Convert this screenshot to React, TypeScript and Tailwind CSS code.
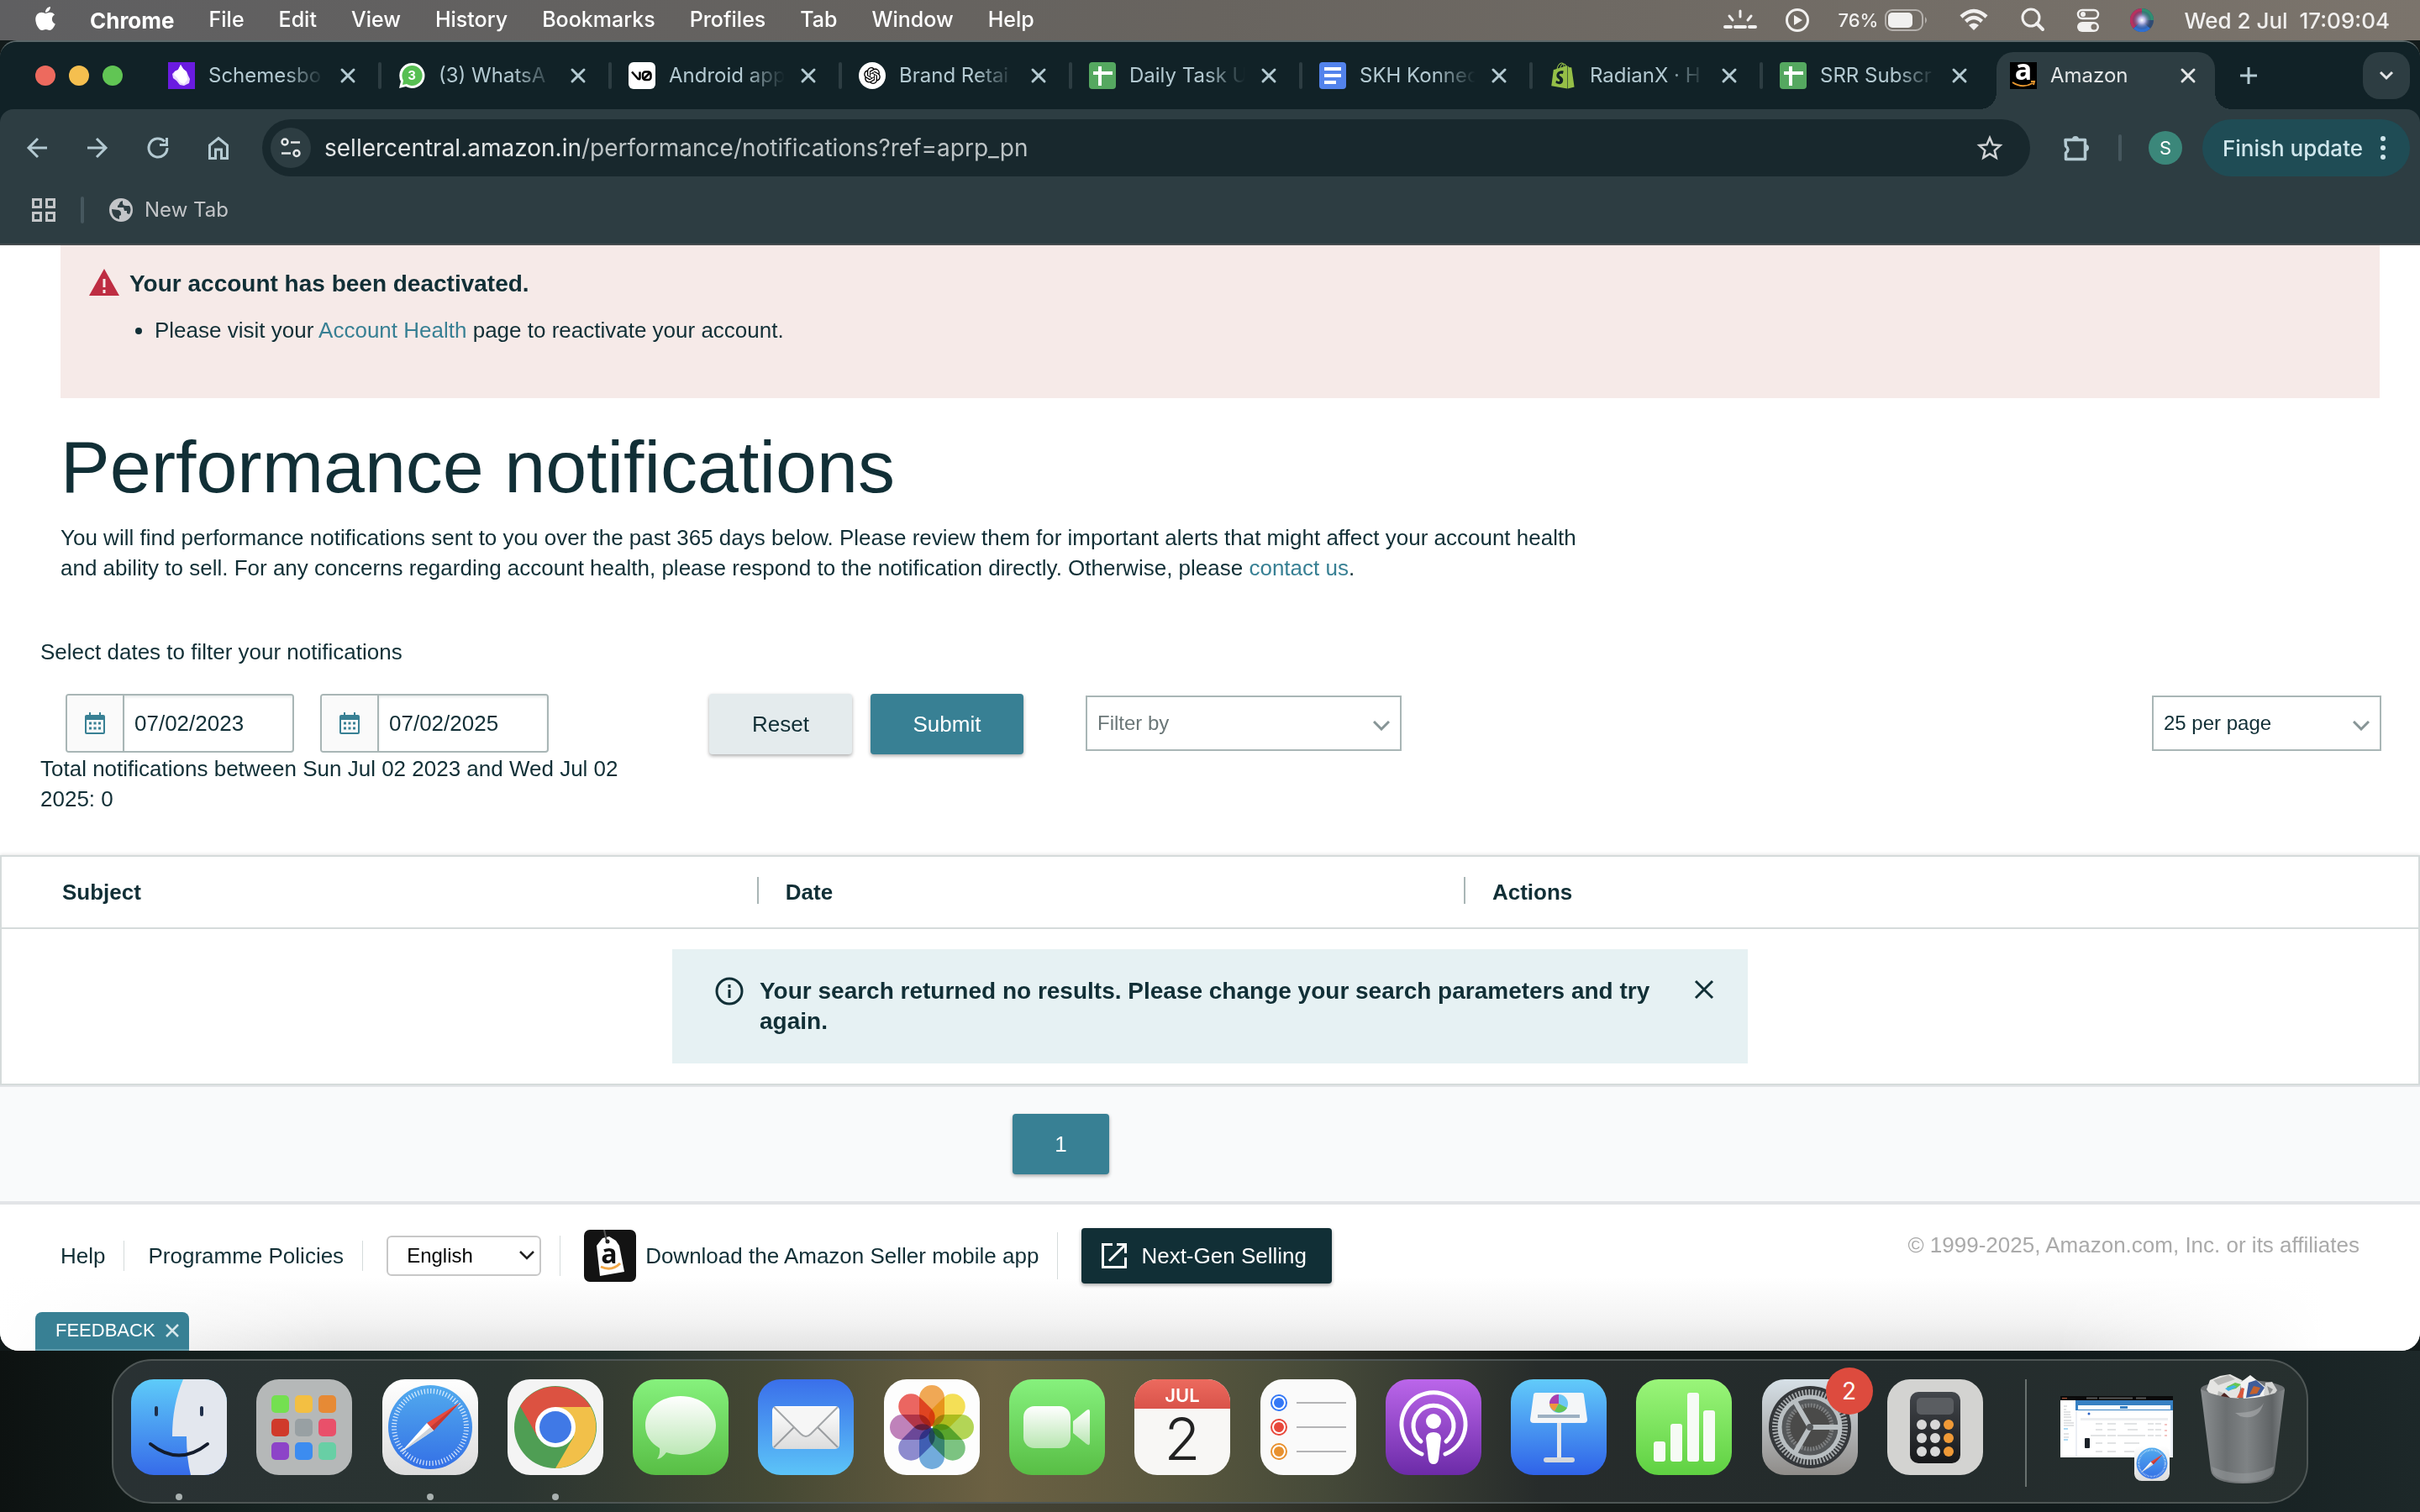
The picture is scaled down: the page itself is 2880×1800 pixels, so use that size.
import React from "react";
import { FaApple, FaShopify } from "react-icons/fa";
import { RiOpenaiFill } from "react-icons/ri";

const menuItems = [
	"File",
	"Edit",
	"View",
	"History",
	"Bookmarks",
	"Profiles",
	"Tab",
	"Window",
	"Help",
];

/* ---------- favicons ---------- */

const SchemesIcon = () => (
	<svg viewBox="0 0 32 32" className="size-8 shrink-0">
		<rect width="32" height="32" fill="#6a1be0" />
		<path
			d="M15 3l3 5 4 3 2 5 2 4-1 5-6 3-5-1-4-5-4-3-1-5 3-3 4-2z"
			fill="#e9dafb"
		/>
		<path d="M15 3l3 5 4 4 1 9-4 5-5-2-3-5-4-4 1-4 4-2z" fill="#fff" />
	</svg>
);

const WhatsappIcon = () => (
	<svg viewBox="0 0 32 32" className="size-8 shrink-0">
		<path
			d="M16 1a15 15 0 1 1-7 28l-8 2 2-8A15 15 0 0 1 16 1z"
			fill="#fff"
		/>
		<path
			d="M16 4a12 12 0 1 1-6 22l-5 1 1-5A12 12 0 0 1 16 4z"
			fill="#57bf52"
		/>
		<text
			x="16"
			y="21"
			fontSize="15"
			fontWeight="700"
			textAnchor="middle"
			fill="#fff"
			fontFamily="Inter, sans-serif"
		>
			3
		</text>
	</svg>
);

const VZeroIcon = () => (
	<svg viewBox="0 0 32 32" className="size-8 shrink-0">
		<rect width="32" height="32" rx="6" fill="#fff" />
		<path
			d="M4 11.500l7.500 8.500q2 1 2-1v-7.500"
			fill="none"
			stroke="#000"
			strokeWidth="2.500"
		/>
		<rect
			x="17"
			y="11.500"
			width="9.500"
			height="9.500"
			rx="3"
			fill="none"
			stroke="#000"
			strokeWidth="2.500"
		/>
		<path d="M18 20l8-8" stroke="#000" strokeWidth="2.500" />
	</svg>
);

const OpenAiIcon = () => (
	<span className="flex size-8 shrink-0 items-center justify-center rounded-full bg-white">
		<RiOpenaiFill className="size-6 text-black" />
	</span>
);

const SheetsIcon = () => (
	<svg viewBox="0 0 32 32" className="size-8 shrink-0">
		<rect width="32" height="32" rx="4" fill="#55a860" />
		<path d="M13 5v23M5 13h23" stroke="#fff" strokeWidth="4" />
	</svg>
);

const DocsIcon = () => (
	<svg viewBox="0 0 32 32" className="size-8 shrink-0">
		<rect width="32" height="32" rx="4" fill="#5383ec" />
		<path d="M6 8h20M6 16h20M6 24h14" stroke="#fff" strokeWidth="4" />
	</svg>
);

const ShopifyIcon = () => (
	<FaShopify className="size-8 shrink-0 text-[#95bf47]" />
);

const AmazonIcon = () => (
	<svg viewBox="0 0 32 32" className="size-8 shrink-0">
		<rect width="32" height="32" fill="#000" />
		<text
			x="16"
			y="21"
			fontSize="34"
			fontWeight="700"
			textAnchor="middle"
			fill="#fff"
			fontFamily="Open Sans, sans-serif"
		>
			a
		</text>
		<path
			d="M3 24q12 8 24 1M25 23h4l-1 4"
			fill="none"
			stroke="#e8962e"
			strokeWidth="2"
		/>
	</svg>
);

const tabs = [
	{ title: "Schemesbo", icon: SchemesIcon },
	{ title: "(3) WhatsA", icon: WhatsappIcon },
	{ title: "Android app", icon: VZeroIcon },
	{ title: "Brand Retai", icon: OpenAiIcon },
	{ title: "Daily Task U", icon: SheetsIcon },
	{ title: "SKH Konnec", icon: DocsIcon },
	{ title: "RadianX · H", icon: ShopifyIcon },
	{ title: "SRR Subscr", icon: SheetsIcon },
];

/* ---------- menu bar ---------- */

const MenuBar = () => (
	<header className="flex h-12 items-center justify-between bg-linear-to-r from-[#5f5f61] via-[#68645f] to-[#7b746c] pr-9 pl-[38px] font-[Inter,sans-serif] text-[25px] text-white">
		<nav className="flex items-center gap-[41px] text-shadow-md">
			<FaApple className="-mt-1 -mr-1 size-8" />
			<button className="text-[26px] font-bold">Chrome</button>
			{menuItems.map((item) => (
				<button key={item} className="font-medium">
					{item}
				</button>
			))}
		</nav>
		<div className="flex items-center text-[#f1f0ef]">
			<svg viewBox="0 0 40 32" className="mr-8 h-8 w-10">
				<path
					d="M20 5v7M7 11l4 5M33 11l-4 5"
					stroke="currentColor"
					strokeWidth="3"
					strokeLinecap="round"
				/>
				<path
					d="M2 24h7M14 24h12M31 24h7"
					stroke="currentColor"
					strokeWidth="4"
					strokeLinecap="round"
				/>
			</svg>
			<svg viewBox="0 0 32 32" className="mr-8 size-8">
				<circle
					cx="16"
					cy="16"
					r="12.500"
					fill="none"
					stroke="currentColor"
					strokeWidth="3"
				/>
				<path d="M12 10l10 6-10 6z" fill="currentColor" />
			</svg>
			<span className="mr-2 text-[22px] font-medium">76%</span>
			<svg viewBox="0 0 52 26" className="mr-9 h-[26px] w-[52px]">
				<rect
					x="1"
					y="1"
					width="44"
					height="24"
					rx="8"
					fill="none"
					stroke="#b5b1ad"
					strokeWidth="2"
				/>
				<rect
					x="4"
					y="4"
					width="29"
					height="18"
					rx="5"
					fill="currentColor"
				/>
				<path d="M48 9q4 4 0 8z" fill="#b5b1ad" />
			</svg>
			<svg viewBox="0 0 36 28" className="mr-9 h-7 w-9">
				<path
					d="M3 10q15-14 30 0M8.500 15.500q9.500-9 19 0"
					fill="none"
					stroke="currentColor"
					strokeWidth="4.500"
				/>
				<path d="M12 20q6-5 12 0l-6 6z" fill="currentColor" />
			</svg>
			<svg viewBox="0 0 32 32" className="mr-9 size-8">
				<circle
					cx="14"
					cy="13"
					r="10"
					fill="none"
					stroke="currentColor"
					strokeWidth="3"
				/>
				<path
					d="M21 20l7 7"
					stroke="currentColor"
					strokeWidth="4"
					strokeLinecap="round"
				/>
			</svg>
			<svg viewBox="0 0 28 28" className="mr-9 size-7">
				<rect
					x="2"
					y="2"
					width="24"
					height="10"
					rx="5"
					fill="none"
					stroke="currentColor"
					strokeWidth="2.500"
				/>
				<circle cx="8" cy="7" r="3" fill="currentColor" />
				<rect
					x="1"
					y="16"
					width="26"
					height="12"
					rx="6"
					fill="currentColor"
				/>
				<circle cx="21" cy="22" r="3.500" fill="#7b746c" />
			</svg>
			<svg viewBox="0 0 28 28" className="mr-9 size-7">
				<defs>
					<radialGradient id="siri">
						<stop offset="0" stopColor="#fff" />
						<stop offset=".35" stopColor="#b9b8e6" />
						<stop offset="1" stopColor="#30406c" stopOpacity=".2" />
					</radialGradient>
				</defs>
				<circle cx="14" cy="14" r="14" fill="#2f4b73" />
				<path d="M14 0A14 14 0 0 0 4 24q6-6 10-10z" fill="#b8315f" />
				<path d="M14 0a14 14 0 0 1 14 14H14z" fill="#2f8f72" />
				<path d="M4 24a14 14 0 0 0 20 0l-10-9z" fill="#2f6fd0" />
				<circle cx="14" cy="14" r="11" fill="url(#siri)" />
			</svg>
			<span className="text-[26px] font-medium whitespace-pre">
				Wed 2 Jul{"  "}17:09:04
			</span>
		</div>
	</header>
);

/* ---------- browser chrome ---------- */

const CloseIcon = () => (
	<svg viewBox="0 0 32 32" className="size-8">
		<path
			d="M9 9l14 14M23 9L9 23"
			stroke="currentColor"
			strokeWidth="3"
			strokeLinecap="round"
		/>
	</svg>
);

const TabStrip = () => (
	<div className="flex h-20 items-end bg-[#112227] font-[Inter,sans-serif] text-2xl text-[#b4cad2]">
		<div className="flex h-[68px] w-[180px] shrink-0 items-center gap-4 pb-3 pl-[42px]">
			<span className="size-6 rounded-full bg-[#ed6a5e]" />
			<span className="size-6 rounded-full bg-[#f5bf4f]" />
			<span className="size-6 rounded-full bg-[#61c554]" />
		</div>
		{tabs.map((tab, index) => (
			<div
				key={tab.title}
				className="flex h-[68px] w-[274px] items-center pb-3 pl-5"
			>
				<tab.icon />
				<span className="ml-4 w-[138px] shrink-0 overflow-hidden mask-r-from-65% whitespace-nowrap">
					{tab.title}
				</span>
				<button aria-label="Close tab" className="mr-5 ml-3">
					<CloseIcon />
				</button>
				{index < tabs.length - 1 && (
					<span className="h-8 w-1 shrink-0 rounded-full bg-[#2d3d42]" />
				)}
			</div>
		))}
		<div className="relative ml-1 flex h-[68px] w-[260px] shrink-0 items-center rounded-t-[20px] bg-[#2d3d42] pb-3 pl-4 text-[#e3e6e7]">
			<span className="absolute bottom-0 -left-5 size-5 bg-[radial-gradient(circle_at_0_0,transparent_20px,#2d3d42_20px)]" />
			<span className="absolute -right-5 bottom-0 size-5 bg-[radial-gradient(circle_at_100%_0,transparent_20px,#2d3d42_20px)]" />
			<AmazonIcon />
			<span className="ml-4 flex-1">Amazon</span>
			<button aria-label="Close tab" className="mr-4">
				<CloseIcon />
			</button>
		</div>
		<button aria-label="New tab" className="mb-6 ml-6 shrink-0">
			<svg viewBox="0 0 32 32" className="size-8">
				<path
					d="M16 6v20M6 16h20"
					stroke="currentColor"
					strokeWidth="3"
				/>
			</svg>
		</button>
		<button
			aria-label="Search tabs"
			className="mr-3 mb-3 ml-auto flex size-14 shrink-0 items-center justify-center rounded-[20px] bg-[#2d3d42] text-[#e3e6e7]"
		>
			<svg viewBox="0 0 20 20" className="size-5">
				<path
					d="M3 6l7 7 7-7"
					fill="none"
					stroke="currentColor"
					strokeWidth="3"
				/>
			</svg>
		</button>
	</div>
);

const Toolbar = () => (
	<div className="flex h-[92px] items-center px-3 font-[Inter,sans-serif] text-[#b4cad2]">
		<div className="flex shrink-0 items-center gap-10 pl-4">
			<button aria-label="Back">
				<svg
					viewBox="0 0 32 32"
					className="size-8"
					fill="none"
					stroke="currentColor"
					strokeWidth="3"
				>
					<path d="M28 16H6M17 5L6 16l11 11" />
				</svg>
			</button>
			<button aria-label="Forward">
				<svg
					viewBox="0 0 32 32"
					className="size-8"
					fill="none"
					stroke="currentColor"
					strokeWidth="3"
				>
					<path d="M4 16h22M15 5l11 11-11 11" />
				</svg>
			</button>
			<button aria-label="Reload">
				<svg
					viewBox="0 0 32 32"
					className="size-8"
					fill="none"
					stroke="currentColor"
					strokeWidth="3"
				>
					<path d="M27 16a11 11 0 1 1-3-7.500M26.500 4v8.500H18" />
				</svg>
			</button>
			<button aria-label="Home">
				<svg
					viewBox="0 0 32 32"
					className="size-8"
					fill="none"
					stroke="currentColor"
					strokeWidth="3"
				>
					<path d="M5.500 13L16 4.500 26.500 13v15.500h-7V18h-7v10.500h-7z" />
				</svg>
			</button>
		</div>
		<div className="ml-9 flex h-[68px] flex-1 items-center rounded-full bg-[#18282d] pr-8 pl-[10px]">
			<button
				aria-label="Site information"
				className="flex size-12 items-center justify-center rounded-full bg-[#2d3d42] text-[#e3e6e7]"
			>
				<svg
					viewBox="0 0 24 24"
					className="size-6"
					fill="none"
					stroke="currentColor"
					strokeWidth="2.500"
				>
					<circle cx="5" cy="5" r="3.500" />
					<circle cx="19" cy="18.500" r="3.500" />
					<path d="M12 5.500h11M1 18.500h11" />
				</svg>
			</button>
			<div className="ml-4 flex-1 text-[28px] text-[#bdc4c6]">
				<span className="text-[#e3e6e7]">sellercentral.amazon.in</span>
				<span>/performance/notifications?ref=aprp_pn</span>
			</div>
			<button aria-label="Bookmark this tab" className="text-[#d0d3d5]">
				<svg
					viewBox="0 0 32 32"
					className="size-8"
					fill="none"
					stroke="currentColor"
					strokeWidth="2.500"
				>
					<path d="M16 4l3.500 8.300 9 .8-6.800 6 2 8.800L16 23.200l-7.700 4.700 2-8.800-6.800-6 9-.8z" />
				</svg>
			</button>
		</div>
		<button aria-label="Extensions" className="ml-[37px]">
			<svg viewBox="0 0 36 36" className="size-9">
				<path
					d="M5 8.500h23.500v23H5.500V24q5-4 0-8z"
					fill="none"
					stroke="currentColor"
					strokeWidth="3.500"
					strokeLinejoin="round"
				/>
				<path
					d="M13 8a4 4 0 0 1 8 0zM29 14a4 4 0 0 1 0 8z"
					fill="currentColor"
				/>
			</svg>
		</button>
		<span className="ml-8 h-8 w-1 rounded-full bg-[#46575e]" />
		<button className="ml-8 size-10 rounded-full bg-[#3b877a] text-[22px] text-white">
			S
		</button>
		<button className="ml-6 flex h-[68px] items-center gap-3 rounded-full bg-[#1f4c55] pr-5 pl-6 text-[26px] font-medium text-[#cfe6ec]">
			Finish update
			<svg viewBox="0 0 24 32" className="h-8 w-6" fill="currentColor">
				<circle cx="12" cy="5" r="3" />
				<circle cx="12" cy="16" r="3" />
				<circle cx="12" cy="27" r="3" />
			</svg>
		</button>
	</div>
);

const BookmarksBar = () => (
	<div className="flex h-[70px] items-center border-b-2 border-[#454b4e] pb-3 pl-[38px] font-[Inter,sans-serif] text-2xl text-[#c3c5c8]">
		<svg
			viewBox="0 0 28 28"
			className="size-7"
			fill="none"
			stroke="currentColor"
			strokeWidth="3"
		>
			<path d="M1.500 1.500h9v9h-9zM17.500 1.500h9v9h-9zM1.500 17.500h9v9h-9zM17.500 17.500h9v9h-9z" />
		</svg>
		<span className="ml-[30px] h-8 w-1 rounded-full bg-[#46575e]" />
		<button className="ml-[30px] flex items-center gap-[14px]">
			<svg viewBox="0 0 28 28" className="size-7">
				<circle cx="14" cy="14" r="14" fill="currentColor" />
				<path
					d="M3 13l8 1q3 1 3 4v2l-2 1v4Q3 23 3 13zM16 3q-4 1-4 4l-2 2v2h7l1 4h3v3l3 1q3-6 0-10h-4q-4 0-4-3z"
					fill="#2d3d42"
				/>
			</svg>
			New Tab
		</button>
	</div>
);

/* ---------- seller central page ---------- */

const AlertBanner = () => (
	<section className="mr-12 ml-[72px] bg-[#f6eae8] px-[34px] pt-7 pb-[63px]">
		<h2 className="flex items-center gap-3 text-[28px] leading-9 font-bold">
			<svg viewBox="0 0 36 32" className="mb-1 h-8 w-9">
				<path d="M18 0l18 32H0z" fill="#be2d42" />
				<path
					d="M18 12v10M18 25v4"
					stroke="#f6eae8"
					strokeWidth="3"
				/>
			</svg>
			Your account has been deactivated.
		</h2>
		<ul className="mt-[19px] list-disc pl-[78px] leading-9">
			<li>
				Please visit your{" "}
				<a href="#health" className="text-[#388094]">
					Account Health
				</a>{" "}
				page to reactivate your account.
			</li>
		</ul>
	</section>
);

const DateField = ({ id, label, value }: { id: string; label: string; value: string }) => (
	<div className="flex h-[70px] w-[272px] overflow-hidden rounded-sm border-2 border-[#a9b6b6] bg-white">
		<label
			htmlFor={id}
			aria-label={label}
			className="flex w-[68px] shrink-0 items-center justify-center border-r-2 border-[#a9b6b6] bg-[#fafafa]"
		>
			<svg viewBox="0 0 24 26" className="h-[26px] w-6">
				<path
					d="M2 3h20a2 2 0 0 1 2 2v19a2 2 0 0 1-2 2H2a2 2 0 0 1-2-2V5a2 2 0 0 1 2-2zM5 0h2v4H5zM17 0h2v4h-2z"
					fill="#388094"
				/>
				<path d="M2 9h20v15H2z" fill="#fafafa" />
				<path
					d="M5 13h14M5 19h14"
					stroke="#388094"
					strokeWidth="3"
					strokeDasharray="3 2.500"
				/>
			</svg>
		</label>
		<input
			id={id}
			defaultValue={value}
			className="w-full min-w-0 pl-3 shadow-[inset_0_2px_3px_#e6eaea] outline-none"
		/>
	</div>
);

const Dropdown = ({ label, value, className }: { label: string; value: string; className: string }) => (
	<div className="relative">
		<select
			aria-label={label}
			className={
				"h-[66px] appearance-none border-2 border-[#a9b6b6] bg-white pl-3 text-2xl " +
				className
			}
		>
			<option>{value}</option>
		</select>
		<svg
			viewBox="0 0 20 12"
			className="pointer-events-none absolute right-[14px] bottom-6 h-3 w-5"
		>
			<path
				d="M1 1l9 9 9-9"
				fill="none"
				stroke="#879596"
				strokeWidth="3"
			/>
		</svg>
	</div>
);

const Filters = () => (
	<section className="pr-[46px] pb-[49px] pl-12">
		<p className="mt-16">Select dates to filter your notifications</p>
		<div className="mt-8 flex items-start">
			<div className="w-[740px]">
				<div className="flex gap-[31px] pl-[30px]">
					<DateField id="from" label="From date" value="07/02/2023" />
					<DateField id="to" label="To date" value="07/02/2025" />
				</div>
				<p className="mt-px">
					Total notifications between Sun Jul 02 2023 and Wed Jul 02
					2025: 0
				</p>
			</div>
			<button className="ml-14 h-[72px] w-[170px] rounded-sm bg-[#e4ebed] shadow-[0_2px_4px_#00000055]">
				Reset
			</button>
			<button className="ml-[22px] h-[72px] w-[182px] rounded-sm bg-[#388094] text-white shadow-[0_2px_4px_#00000055]">
				Submit
			</button>
			<div className="mt-[2px] ml-[74px] flex flex-1 justify-between">
				<Dropdown
					label="Filter by"
					value="Filter by"
					className="w-[376px] text-[#6b7778]"
				/>
				<Dropdown
					label="Results per page"
					value="25 per page"
					className="w-[273px]"
				/>
			</div>
		</div>
	</section>
);

const Results = () => (
	<table className="w-full table-fixed border-separate border-spacing-0 border-2 border-[#d5dbdb] shadow-[0_-1px_4px_#0000001a]">
		<thead>
			<tr className="h-[86px] text-left">
				<th className="w-[31.25%] border-b-2 border-[#d5dbdb] pl-[72px]">
					Subject
				</th>
				<th className="w-[29.25%] border-b-2 border-[#d5dbdb]">
					<div className="-mt-1 flex h-8 items-center border-l-2 border-[#a9b6b6] pl-8">
						<span className="mt-1">Date</span>
					</div>
				</th>
				<th className="border-b-2 border-[#d5dbdb]">
					<div className="-mt-1 flex h-8 items-center border-l-2 border-[#a9b6b6] pl-8">
						<span className="mt-1">Actions</span>
					</div>
				</th>
			</tr>
		</thead>
		<tbody>
			<tr>
				<td colSpan={3} className="py-6">
					<div className="mx-auto flex h-[136px] w-[1280px] items-start bg-[#e6f1f3] pt-8 pr-10 pl-[50px] text-[28px] font-bold">
						<svg
							viewBox="0 0 36 36"
							className="mr-[18px] size-9 shrink-0"
							fill="none"
							stroke="currentColor"
							strokeWidth="3"
						>
							<circle cx="18" cy="18" r="15" />
							<path d="M18 16v10M18 10v4" />
						</svg>
						<p className="flex-1">
							Your search returned no results. Please change your
							search parameters and try again.
						</p>
						<button aria-label="Dismiss" className="mt-1 ml-8">
							<svg viewBox="0 0 24 24" className="size-6">
								<path
									d="M2 2l20 20M22 2L2 22"
									stroke="currentColor"
									strokeWidth="3"
								/>
							</svg>
						</button>
					</div>
				</td>
			</tr>
		</tbody>
	</table>
);

const PageFooter = () => (
	<footer className="rounded-b-[22px] bg-[linear-gradient(to_right,white,transparent_14%,transparent_85%,white_96%),linear-gradient(to_bottom,white_50%,#f4f4f4_78%,#e3e3e3)] pl-[72px]">
		<div className="flex items-start pt-7 pr-[72px]">
			<div className="flex h-[66px] items-center">
				<a href="#help">Help</a>
				<span className="ml-[22px] h-9 w-px bg-[#d5dbdb]" />
				<a href="#policies" className="ml-7">
					Programme Policies
				</a>
				<span className="ml-[22px] h-9 w-px bg-[#d5dbdb]" />
				<div className="relative ml-7">
					<select
						aria-label="Language"
						className="h-12 w-[184px] appearance-none rounded-md border-2 border-[#c8c8c8] bg-white pl-[22px] text-2xl text-black"
					>
						<option>English</option>
					</select>
					<svg
						viewBox="0 0 18 12"
						className="pointer-events-none absolute top-[18px] right-2 h-3 w-[18px]"
					>
						<path
							d="M1 1l8 8 8-8"
							fill="none"
							stroke="#222"
							strokeWidth="2.500"
						/>
					</svg>
				</div>
				<span className="ml-[22px] h-12 w-px bg-[#d5dbdb]" />
				<a href="#app" className="ml-7 flex items-center gap-[11px]">
					<svg viewBox="0 0 62 62" className="size-[62px]">
						<rect width="62" height="62" rx="7" fill="#131313" />
						<path
							d="M15 19l7-9 8-2 8 5 4 6 6 31-29 5z"
							fill="#fff"
						/>
						<path
							d="M24 0l3 14"
							stroke="#555"
							strokeWidth="2"
						/>
						<circle cx="28" cy="14" r="2.500" fill="#222" />
						<text
							x="30"
							y="40"
							fontSize="32"
							fontWeight="700"
							textAnchor="middle"
							fill="#111"
							fontFamily="Open Sans, sans-serif"
						>
							a
						</text>
						<path
							d="M20 44q13 6 23-4"
							fill="none"
							stroke="#f3a847"
							strokeWidth="3"
						/>
					</svg>
					Download the Amazon Seller mobile app
				</a>
				<span className="ml-[22px] h-14 w-px bg-[#d5dbdb]" />
				<button className="ml-7 flex h-[66px] items-center gap-[17px] rounded-sm bg-[#112f36] pr-[30px] pl-6 text-white shadow-[0_2px_4px_#00000055]">
					<svg
						viewBox="0 0 30 30"
						className="size-[30px]"
						fill="none"
						stroke="currentColor"
						strokeWidth="3"
					>
						<path d="M13 1.500H1.500v27h27V17M18 1.500h10.500V12M28 2L9 21" />
					</svg>
					Next-Gen Selling
				</button>
			</div>
			<p className="mt-[2px] ml-auto text-[#aaaaaa]">
				© 1999-2025, Amazon.com, Inc. or its affiliates
			</p>
		</div>
		<div className="-ml-[30px] flex pt-[34px]">
			<button className="flex h-[46px] items-center gap-3 rounded-t-lg border-b-2 border-[#5f9bab] bg-[#388094] pr-3 pl-6 text-[22px] text-white">
				FEEDBACK
				<svg viewBox="0 0 16 16" className="size-4">
					<path
						d="M1 1l14 14M15 1L1 15"
						stroke="#d5e6ea"
						strokeWidth="2.500"
					/>
				</svg>
			</button>
		</div>
	</footer>
);

/* ---------- dock ---------- */

const Tile = ({ fill, children }: { fill: string; children: React.ReactNode }) => (
	<svg viewBox="0 0 114 114" className="size-[114px]">
		<rect width="114" height="114" rx="27" fill={fill} />
		{children}
	</svg>
);

// shared gradients for the dock artwork
const Gradients = () => (
	<svg className="absolute size-0" aria-hidden="true">
		<defs>
			{[
				["blueUp", "#3a6fea", "#5cc4f8"],
				["blueDown", "#62cbfa", "#2f62e8"],
				["finder", "#5ecbf9", "#366be9"],
				["green", "#86f17d", "#58be45"],
				["numbers", "#9af57a", "#5fd142"],
				["purple", "#bb66ea", "#6c2ba8"],
				["white", "#ffffff", "#dcdcdc"],
				["red", "#ec6a5e", "#d9534a"],
				["glass", "#ffffff", "#b8e6b1"],
				["metal", "#d6e0e7", "#8f8c89"],
				["compass", "#52abee", "#3470e6"],
				["dark", "#43474c", "#17181a"],
			].map(([id, from, to]) => (
				<linearGradient key={id} id={id} x1="0" y1="0" x2="0" y2="1">
					<stop offset="0" stopColor={from} />
					<stop offset="1" stopColor={to} />
				</linearGradient>
			))}
			<linearGradient id="can">
				<stop offset="0" stopColor="#8b8f91" />
				<stop offset=".3" stopColor="#6b6f71" />
				<stop offset=".55" stopColor="#7f8385" />
				<stop offset=".85" stopColor="#5f6365" />
				<stop offset="1" stopColor="#85898b" />
			</linearGradient>
		</defs>
	</svg>
);

const Finder = () => (
	<Tile fill="url(#finder)">
		<path
			d="M62 0h25a27 27 0 0 1 27 27v60a27 27 0 0 1-27 27H71q-5-20-5-46H49Q49 30 62 0z"
			fill="#e3e7ee"
		/>
		<path
			d="M30 34v8M84 34v8"
			stroke="#1f2f4a"
			strokeWidth="4"
			strokeLinecap="round"
		/>
		<path
			d="M23 77q34 27 68 0"
			fill="none"
			stroke="#131c2c"
			strokeWidth="4"
			strokeLinecap="round"
		/>
	</Tile>
);

const launchpadColors = [
	"#74e050",
	"#f3bf42",
	"#e68a35",
	"#d03a2b",
	"#98a0a3",
	"#e9506a",
	"#8d44c8",
	"#3c8cf0",
	"#68cfa5",
];

const Launchpad = () => (
	<Tile fill="#b5b8b8">
		{launchpadColors.map((color, i) => (
			<rect
				key={color}
				x={18 + (i % 3) * 28}
				y={19 + Math.floor(i / 3) * 28}
				width="21"
				height="21"
				rx="5"
				fill={color}
			/>
		))}
	</Tile>
);

const Compass = () => (
	<>
		<circle cx="57" cy="57" r="50" fill="url(#compass)" />
		<circle
			cx="57"
			cy="57"
			r="43"
			fill="none"
			stroke="#fff"
			strokeOpacity=".8"
			strokeWidth="6"
			strokeDasharray="1.200 2.550"
		/>
		<path d="M92 28L53 52l8 9z" fill="#e8493d" />
		<path d="M92 28L61 61l-4-4z" fill="#c23a35" />
		<path d="M22 87l31-35 8 9z" fill="#fff" />
		<path d="M22 87l35-30 4 4z" fill="#cfd4da" />
	</>
);

const Safari = () => (
	<Tile fill="url(#white)">
		<Compass />
	</Tile>
);

const Chrome = () => (
	<Tile fill="#f4f4f4">
		<circle cx="57" cy="57" r="49" fill="#4f9e54" />
		<path d="M57 33h42a49 49 0 0 1-42 73l22-38z" fill="#f2c049" />
		<path d="M15 32a49 49 0 0 1 84 1H57L36 69z" fill="#dc5241" />
		<circle cx="57" cy="57" r="24" fill="#fff" />
		<circle cx="57" cy="57" r="19" fill="#4079e6" />
	</Tile>
);

const Messages = () => (
	<Tile fill="url(#green)">
		<path
			d="M57 20c24 0 42 15 42 35S81 90 57 90q-9 0-17-3-5 7-11 8 4-6 3-13-17-10-17-27c0-20 18-35 42-35z"
			fill="url(#glass)"
		/>
	</Tile>
);

const Mail = () => (
	<Tile fill="url(#blueUp)">
		<rect x="17" y="32" width="80" height="51" rx="5" fill="url(#white)" />
		<path
			d="M19 81l24-24M95 81L71 57"
			stroke="#9a9da0"
			strokeWidth="2"
		/>
		<path
			d="M19 33l32 32q6 6 12 0l32-32"
			fill="#f6f6f6"
			stroke="#a3a6a9"
			strokeWidth="2"
		/>
	</Tile>
);

const petals = [
	"#f09a37",
	"#f4dc3a",
	"#a8d03a",
	"#66bb6c",
	"#5b9fd8",
	"#7a78c8",
	"#b66db0",
	"#ea4c46",
];

const Photos = () => (
	<Tile fill="#fdfdfd">
		{petals.map((color, i) => (
			<rect
				key={color}
				x="42"
				y="7"
				width="30"
				height="49"
				rx="15"
				fill={color}
				fillOpacity=".85"
				className="mix-blend-multiply"
				transform={`rotate(${i * 45} 57 57)`}
			/>
		))}
	</Tile>
);

const FaceTime = () => (
	<Tile fill="url(#green)">
		<rect x="17" y="32" width="56" height="50" rx="13" fill="url(#glass)" />
		<path
			d="M76 50l16-13q4-3 4 2v36q0 5-4 2L76 64z"
			fill="url(#glass)"
		/>
	</Tile>
);

const Calendar = () => (
	<Tile fill="#f8f7f5">
		<path
			d="M27 0h60a27 27 0 0 1 27 27v8H0v-8A27 27 0 0 1 27 0z"
			fill="url(#red)"
		/>
		<text
			x="57"
			y="27"
			fontSize="22"
			fontWeight="600"
			textAnchor="middle"
			fill="#fff"
			fontFamily="Inter, sans-serif"
		>
			JUL
		</text>
		<text
			x="57"
			y="96"
			fontSize="70"
			fontWeight="300"
			textAnchor="middle"
			fill="#222"
			fontFamily="Inter, sans-serif"
		>
			2
		</text>
	</Tile>
);

const Reminders = () => (
	<Tile fill="#fafafa">
		{["#3478f6", "#e8483b", "#e8912f"].map((color, i) => (
			<g key={color}>
				<circle
					cx="22"
					cy={28 + i * 29}
					r="9"
					fill="#fff"
					stroke={color}
					strokeWidth="2"
				/>
				<circle cx="22" cy={28 + i * 29} r="6" fill={color} />
				<path
					d={`M43 ${28 + i * 29}h59`}
					stroke="#b4b4b6"
					strokeWidth="2"
				/>
			</g>
		))}
	</Tile>
);

const Podcasts = () => (
	<Tile fill="url(#purple)">
		<g fill="none" stroke="#fff" strokeWidth="5" strokeLinecap="round">
			<path d="M43 89a38 38 0 1 1 28 0" />
			<path d="M42 74a24 24 0 1 1 30 0" />
		</g>
		<circle cx="57" cy="50" r="9" fill="#fff" />
		<path
			d="M48 70q1-7 9-7t9 7l-3 25q-1 6-6 6t-6-6z"
			fill="#fff"
		/>
	</Tile>
);

const Keynote = () => (
	<Tile fill="url(#blueDown)">
		<rect x="55" y="50" width="5" height="46" fill="#e3e6ea" />
		<rect x="39" y="93" width="37" height="6" rx="3" fill="#d5d8dc" />
		<path
			d="M30 16h54q3 0 3 3l4 29q0 4-4 4H27q-4 0-4-4l4-29q0-3 3-3z"
			fill="#f4f6f8"
		/>
		<path d="M32 44h50" stroke="#9db0c2" strokeWidth="4" />
		<circle cx="57" cy="29" r="11" fill="#6fc7f5" />
		<path d="M57 29V18a11 11 0 0 0-11 11z" fill="#a93fb0" />
		<path d="M57 29H46a11 11 0 0 0 6 9z" fill="#f0953c" />
		<path d="M57 29l-5 9a11 11 0 0 0 15-4z" fill="#66c455" />
	</Tile>
);

const Numbers = () => (
	<Tile fill="url(#numbers)">
		<g fill="#f6fbf5">
			<rect x="21" y="74" width="14" height="24" rx="3" />
			<rect x="41" y="53" width="14" height="45" rx="3" />
			<rect x="61" y="16" width="14" height="82" rx="3" />
			<rect x="80" y="37" width="14" height="61" rx="3" />
		</g>
	</Tile>
);

const Settings = () => (
	<div className="relative">
		<Tile fill="url(#metal)">
			<circle cx="57" cy="57" r="49" fill="#34373a" />
			<circle
				cx="57"
				cy="57"
				r="41"
				fill="none"
				stroke="#a5a9ab"
				strokeWidth="8"
				strokeDasharray="2 1.900"
			/>
			<circle
				cx="57"
				cy="57"
				r="36"
				fill="#55585a"
				stroke="#b9bfc2"
				strokeWidth="5"
			/>
			<circle
				cx="57"
				cy="57"
				r="26"
				fill="#4a4a49"
				stroke="#7d7f80"
				strokeWidth="5"
				strokeDasharray="2 1.500"
			/>
			<path
				d="M57 57h36M57 57L39 26M57 57L39 88"
				stroke="#b9bfc2"
				strokeWidth="6"
			/>
			<circle cx="57" cy="57" r="4" fill="#55585a" />
		</Tile>
		<span className="absolute -top-[14px] -right-[18px] flex size-14 items-center justify-center rounded-full bg-[#dd4b3e] text-[28px] text-white">
			2
		</span>
	</div>
);

const Calculator = () => (
	<Tile fill="#d3d3d1">
		<rect x="27" y="15" width="60" height="85" rx="10" fill="url(#dark)" />
		<rect x="35" y="22" width="44" height="20" rx="5" fill="#5a5d61" />
		{[0, 1, 2].map((row) =>
			[0, 1, 2].map((col) => (
				<circle
					key={`${row}${col}`}
					cx={41 + col * 16}
					cy={54 + row * 16}
					r="6"
					fill={col === 2 ? "#f09a37" : "#d8d8d8"}
				/>
			))
		)}
	</Tile>
);

const dockApps = [
	{ name: "Finder", icon: Finder, running: true },
	{ name: "Launchpad", icon: Launchpad },
	{ name: "Safari", icon: Safari, running: true },
	{ name: "Chrome", icon: Chrome, running: true },
	{ name: "Messages", icon: Messages },
	{ name: "Mail", icon: Mail },
	{ name: "Photos", icon: Photos },
	{ name: "FaceTime", icon: FaceTime },
	{ name: "Calendar", icon: Calendar },
	{ name: "Reminders", icon: Reminders },
	{ name: "Podcasts", icon: Podcasts },
	{ name: "Keynote", icon: Keynote },
	{ name: "Numbers", icon: Numbers },
	{ name: "Settings", icon: Settings },
	{ name: "Calculator", icon: Calculator },
];

const MinimisedWindow = () => (
	<svg viewBox="0 0 134 102" className="h-[102px] w-[134px]">
		<rect y="1" width="134" height="72" fill="#fff" />
		<rect width="134" height="5" fill="#0a0a0a" />
		<path d="M31 2.500h13M46 2.500h40M90 2.500h12" stroke="#555" strokeWidth="2" />
		<path d="M2 2.500h6" stroke="#b85a3a" strokeWidth="1" />
		<rect x="18" y="5" width="116" height="12" fill="#3780c3" />
		<rect x="21" y="11" width="110" height="5" fill="#fff" />
		<rect x="71" y="12" width="9" height="3" fill="#3780c3" />
		<rect x="18" y="17" width="2" height="55" fill="#eceff5" />
		<rect x="131" y="17" width="3" height="55" fill="#eceff5" />
		<circle cx="34" cy="21" r="1.500" fill="#2b62c4" />
		<rect x="24" y="26" width="104" height="3" fill="#eceef0" />
		<g stroke="#c4c7ca">
			<path d="M4 12h4M4 16h3M4 19h8M4 22h8M4 25h9M4 29h9M4 32h12M4 35h12M4 45h6M4 49h6" />
			<path d="M42 33h8M56 33h10M76 33h15M104 33h7M113 33h7M42 40h8M56 40h10M80 40h12M104 40h7M113 40h7M36 47h18M56 47h10M68 47h33M104 47h7M113 47h7M42 56h8M56 56h10M76 56h18M42 66h8M56 66h10M76 66h12" />
		</g>
		<path d="M124 34h3M124 41h3M124 47h3" stroke="#e98b86" />
		<path d="M4 39h5M4 52h5" stroke="#5ab3ea" />
		<rect x="29" y="50" width="6" height="12" rx="1" fill="#1a2027" />
		<svg x="88" y="59" width="42" height="42" viewBox="0 0 114 114">
			<rect width="114" height="114" rx="24" fill="url(#white)" />
			<Compass />
		</svg>
	</svg>
);

const Trash = () => (
	<svg viewBox="0 0 102 134" className="h-[134px] w-[102px]">
		<ellipse cx="51" cy="20" rx="50" ry="11" fill="#6d7173" />
		<path d="M8 20l4-11 12-5 12-2 14 7-4 22-30 1z" fill="#e4e4e2" />
		<path d="M16 9l18-6 8 5-20 7zM22 22l10 4 2 6H20z" fill="#b9bab8" />
		<path d="M48 12L60 3l19 15-2 14H52z" fill="#f2f2f1" />
		<path d="M58 12l9-3 10 9-6 9-16 3z" fill="#3f5d9a" />
		<path d="M64 16l8 2-4 7-9 1z" fill="#c4622e" />
		<path d="M32 17l10-5 7 2-6 5-8 2z" fill="#67c552" />
		<path d="M30 19l10-4 4 2-10 5z" fill="#3fb3e6" />
		<path d="M44 30l6-12 3 1-2 11z" fill="#d8563c" />
		<path d="M78 12l8-1 6 10-6 9-10-3z" fill="#d3d4d3" />
		<path d="M80 16l7 4-4 6z" fill="#8c8e8e" />
		<path d="M23 30l6-6 8 7z" fill="#4d2320" />
		<path
			d="M1 20q50 22 100 0L89 116q-2 16-38 16t-38-16z"
			fill="url(#can)"
		/>
		<path d="M14 112q37 16 74 0l-2 8q-8 10-35 10t-35-10z" fill="#9da1a4" fillOpacity=".45" />
		<path d="M42 48q28 0 34-12-6 22-28 16z" fill="#b5b8ba" fillOpacity=".5" />
	</svg>
);

const Dock = () => (
	<div className="bg-[linear-gradient(to_right,#0d1211,#172422_12%,#23302c_25%,#484636_38%,#3a3a2f_50%,#151a18_65%,#111a1b_85%,#1d2829)] py-[10px] font-[Inter,sans-serif]">
		<div className="mx-auto flex h-[172px] w-full max-w-[2614px] rounded-[48px] border-2 border-[#4e5655] bg-[linear-gradient(to_right,#293133,#2a3431_18%,#454833_30%,#6c6143_40%,#5a583e_48%,#464a39_55%,#272c2b_65%,#232b2c_80%,#27302f)] pt-[22px] pr-[25px] pl-[21px]">
			<Gradients />
			<div className="flex flex-1 justify-between">
				{dockApps.map((app) => (
					<button
						key={app.name}
						aria-label={app.name}
						className="flex h-[144px] flex-col items-center justify-between"
					>
						<app.icon />
						{app.running && (
							<span className="size-2 rounded-full bg-[#a9b1b0]" />
						)}
					</button>
				))}
			</div>
			<span className="mr-10 ml-[50px] h-32 w-[2px] bg-[#69716f]" />
			<button aria-label="Minimised window" className="mr-8 self-start pt-5">
				<MinimisedWindow />
			</button>
			<button aria-label="Trash" className="-mt-2 self-start">
				<Trash />
			</button>
		</div>
	</div>
);

export default function App() {
	return (
		<div className="min-h-screen bg-[#121a1a]">
			<MenuBar />
			<main className="rounded-t-[20px] border-t-2 border-[#5b6769] bg-[#112227]">
				<div className="overflow-hidden rounded-t-[20px]">
					<TabStrip />
					<div className="rounded-t-2xl bg-[#2d3d42]">
						<Toolbar />
						<BookmarksBar />
					</div>
				</div>
			</main>
			<div className="rounded-b-[22px] bg-white font-['Liberation_Sans',Arial,sans-serif] text-[26px] leading-9 text-[#112f36]">
				<AlertBanner />
				<h1 className="mt-[30px] ml-[72px] text-[88px] leading-[104px]">
					Performance notifications
				</h1>
				<p className="mt-[14px] ml-[72px] max-w-[1836px]">
					You will find performance notifications sent to you over the
					past 365 days below. Please review them for important alerts
					that might affect your account health and ability to sell. For
					any concerns regarding account health, please respond to the
					notification directly. Otherwise, please{" "}
					<a href="#contact" className="text-[#388094]">
						contact us
					</a>
					.
				</p>
				<Filters />
				<Results />
				<div className="flex justify-center border-t-2 border-b-4 border-[#e2e4e7] bg-[#f9fafb] py-8 pr-[355px]">
					<button className="h-[72px] w-[115px] rounded-sm bg-[#388094] text-white shadow-[0_2px_4px_#00000055]">
						1
					</button>
				</div>
				<PageFooter />
			</div>
			<Dock />
		</div>
	);
}
